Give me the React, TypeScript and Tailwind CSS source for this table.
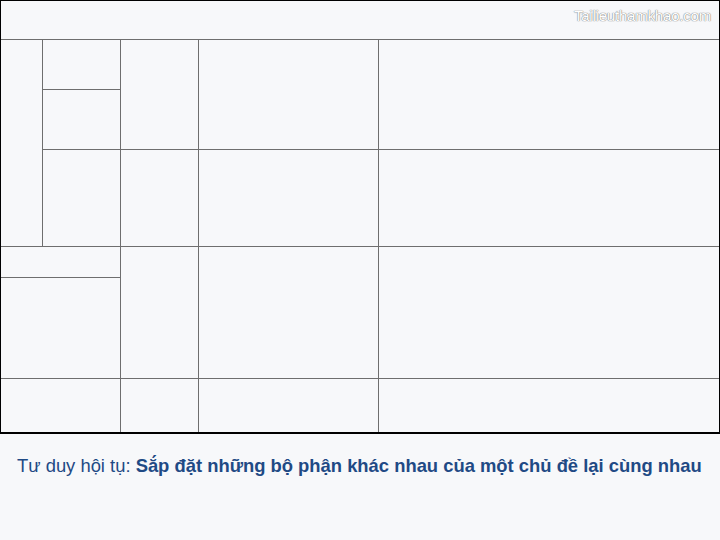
export default function App() {
  const cell = "bg-[#f7f8fa]";
  return (
    <div className="w-[720px] h-[540px] bg-[#f7f8fa] flex flex-col font-['Liberation_Sans',Arial,sans-serif]">
      {/* framed grid of blank boxes */}
      <div className="grid grid-cols-[41px_77px_77px_179px_340px] grid-rows-[38px_49px_59px_96px_30px_100px_53px] gap-px bg-[#6e6e6e] border border-black border-b-2">
        <div className={`${cell} col-span-5 flex justify-end items-start pt-[6px] pr-[8px]`}>
          <span className="text-[15px] leading-[18px] text-white tracking-[-0.2px] [text-shadow:0_0_1px_#777,0_0_1px_#777]">
            Tailieuthamkhao.com
          </span>
        </div>
        <div className={`${cell} col-start-1 row-start-2 row-span-3`} />
        <div className={`${cell} col-start-2 row-start-2`} />
        <div className={`${cell} col-start-2 row-start-3`} />
        <div className={`${cell} col-start-3 row-start-2 row-span-2`} />
        <div className={`${cell} col-start-4 row-start-2 row-span-2`} />
        <div className={`${cell} col-start-5 row-start-2 row-span-2`} />
        <div className={`${cell} col-start-2 row-start-4`} />
        <div className={`${cell} col-start-3 row-start-4`} />
        <div className={`${cell} col-start-4 row-start-4`} />
        <div className={`${cell} col-start-5 row-start-4`} />
        <div className={`${cell} col-start-1 col-span-2 row-start-5`} />
        <div className={`${cell} col-start-1 col-span-2 row-start-6`} />
        <div className={`${cell} col-start-3 row-start-5 row-span-2`} />
        <div className={`${cell} col-start-4 row-start-5 row-span-2`} />
        <div className={`${cell} col-start-5 row-start-5 row-span-2`} />
        <div className={`${cell} col-start-1 col-span-2 row-start-7`} />
        <div className={`${cell} col-start-3 row-start-7`} />
        <div className={`${cell} col-start-4 row-start-7`} />
        <div className={`${cell} col-start-5 row-start-7`} />
      </div>

      {/* caption */}
      <div className="pt-[21px] pl-[17px] text-[18.4px] leading-[22px] text-[#1f4a85] whitespace-nowrap">
        Tư duy hội tụ: <span className="font-bold">Sắp đặt những bộ phận khác nhau của một chủ đề lại cùng nhau</span>
      </div>
    </div>
  );
}
